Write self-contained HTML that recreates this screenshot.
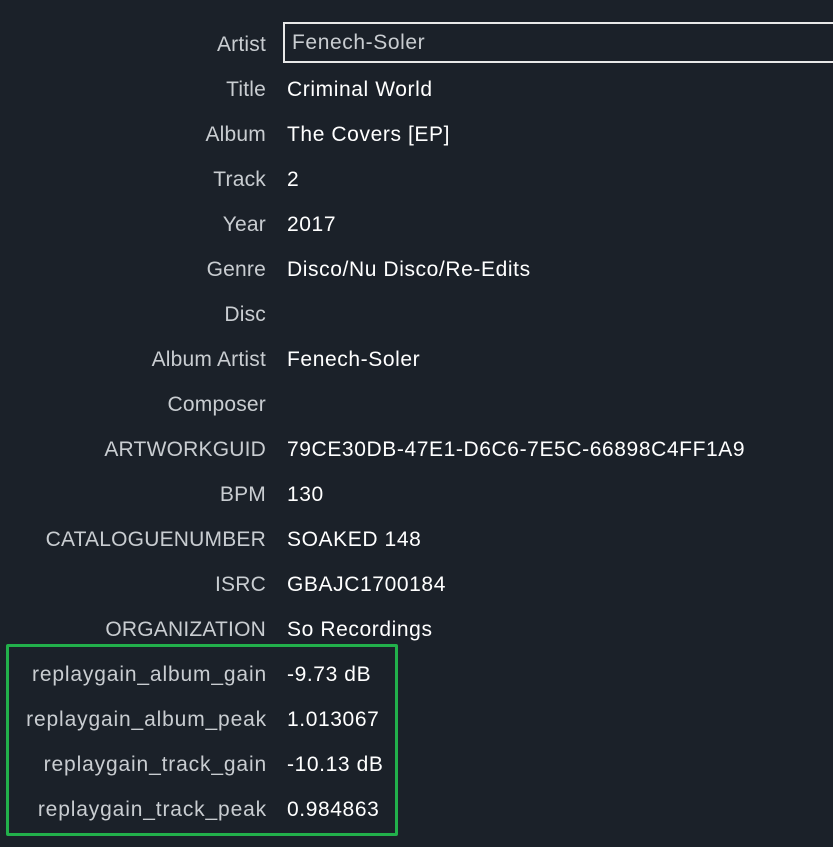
<!DOCTYPE html>
<html><head><meta charset="utf-8"><style>
html,body{margin:0;padding:0;background:#1b2129;width:833px;height:847px;overflow:hidden;font-family:"Liberation Sans",sans-serif;font-size:21px;}
.r{position:absolute;left:0;width:833px;height:45px;line-height:45px;}
.l{position:absolute;right:567px;color:#c9cdd1;white-space:nowrap;letter-spacing:0.2px;}
.rg .l{letter-spacing:0.85px;right:566px;}
.v{position:absolute;left:287px;color:#ffffff;white-space:nowrap;letter-spacing:0.6px;}
.inp{position:absolute;left:283px;top:22px;width:560px;height:37px;border:2px solid #e8e8e8;box-sizing:content-box;}
.inp span{position:absolute;left:7px;top:0px;line-height:37px;color:#c9cdd1;letter-spacing:0.6px;}
.g{position:absolute;left:6px;top:644px;width:386px;height:186px;border:3px solid #22b04b;border-radius:2px;}
</style></head><body>
<div class="inp"><span>Fenech-Soler</span></div>
<div class="r" style="top:22px"><span class="l">Artist</span></div>
<div class="r" style="top:67px"><span class="l">Title</span><span class="v">Criminal World</span></div>
<div class="r" style="top:112px"><span class="l">Album</span><span class="v">The Covers [EP]</span></div>
<div class="r" style="top:157px"><span class="l">Track</span><span class="v">2</span></div>
<div class="r" style="top:202px"><span class="l">Year</span><span class="v">2017</span></div>
<div class="r" style="top:247px"><span class="l">Genre</span><span class="v">Disco/Nu Disco/Re-Edits</span></div>
<div class="r" style="top:292px"><span class="l">Disc</span></div>
<div class="r" style="top:337px"><span class="l">Album Artist</span><span class="v">Fenech-Soler</span></div>
<div class="r" style="top:382px"><span class="l">Composer</span></div>
<div class="r" style="top:427px"><span class="l">ARTWORKGUID</span><span class="v">79CE30DB-47E1-D6C6-7E5C-66898C4FF1A9</span></div>
<div class="r" style="top:472px"><span class="l">BPM</span><span class="v">130</span></div>
<div class="r" style="top:517px"><span class="l">CATALOGUENUMBER</span><span class="v">SOAKED 148</span></div>
<div class="r" style="top:562px"><span class="l">ISRC</span><span class="v">GBAJC1700184</span></div>
<div class="r" style="top:607px"><span class="l">ORGANIZATION</span><span class="v">So Recordings</span></div>
<div class="g"></div>
<div class="r rg" style="top:652px"><span class="l">replaygain_album_gain</span><span class="v">-9.73 dB</span></div>
<div class="r rg" style="top:697px"><span class="l">replaygain_album_peak</span><span class="v">1.013067</span></div>
<div class="r rg" style="top:742px"><span class="l">replaygain_track_gain</span><span class="v">-10.13 dB</span></div>
<div class="r rg" style="top:787px"><span class="l">replaygain_track_peak</span><span class="v">0.984863</span></div>
</body></html>
